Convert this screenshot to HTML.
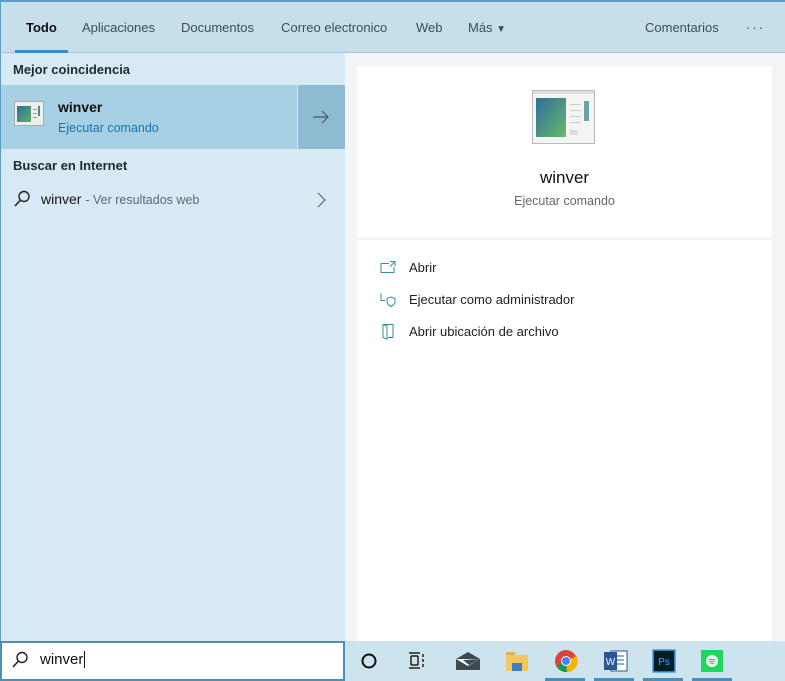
<!DOCTYPE html>
<html><head><meta charset="utf-8"><style>
*{margin:0;padding:0;box-sizing:border-box}
body{width:785px;height:681px;overflow:hidden;font-family:"Segoe UI","Liberation Sans",sans-serif;background:#cde3ee;position:relative;color:#1a1a1a}
.abs{position:absolute}
#top{left:0;top:0;width:785px;height:53px;background:#c6dfeb;border-top:2px solid #5d9cc2;border-left:1px solid #5d9cc2;border-bottom:1px solid #a9c6d4}
.tab{position:absolute;top:18px;font-size:13px;color:#3b4f5a}
#left{left:0;top:53px;width:345px;height:588px;background:#d7eaf3;border-left:1px solid #5d9cc2}
#right{left:345px;top:53px;width:440px;height:588px;background:#f2f4f5}
.card{position:absolute;background:#fff}
.act{position:absolute;left:52px;font-size:13px;color:#222}
</style></head><body>
<div id="top" class="abs">
<div class="tab" style="left:25px;color:#111;font-weight:bold">Todo</div>
<div class="abs" style="left:14px;top:48px;width:53px;height:3px;background:#3a8cc4"></div>
<div class="tab" style="left:81px">Aplicaciones</div>
<div class="tab" style="left:180px">Documentos</div>
<div class="tab" style="left:280px">Correo electronico</div>
<div class="tab" style="left:415px">Web</div>
<div class="tab" style="left:467px">Más <span style="font-size:10px">▼</span></div>
<div class="tab" style="left:644px">Comentarios</div>
<div class="tab" style="left:745px;letter-spacing:2px">···</div>
</div>
<div id="left" class="abs">
<div class="abs" style="left:12px;top:9px;font-size:13px;font-weight:bold;color:#1e2a30">Mejor coincidencia</div>
<div class="abs" style="left:0;top:32px;width:296px;height:64px;background:#a8d0e5"></div>
<div class="abs" style="left:297px;top:32px;width:48px;height:64px;background:#8fbbd2"></div>
<svg class="abs" style="left:311px;top:57px" width="18" height="14"><path d="M1 7H16M10 1L16 7L10 13" fill="none" stroke="#4a5a63" stroke-width="1.2"/></svg>
<svg class="abs" style="left:13px;top:48px" width="30" height="25"><rect x="0.5" y="0.5" width="29" height="24" fill="#eee" stroke="#aaa"/><defs><linearGradient id="g" x1="0" y1="0" x2="1" y2="1"><stop offset="0" stop-color="#2a6f9a"/><stop offset="1" stop-color="#5fb06a"/></linearGradient></defs><rect x="3" y="5" width="14" height="16" fill="url(#g)"/><rect x="24" y="5" width="2" height="10" fill="#4a8a8a"/><rect x="19" y="8" width="4" height="1" fill="#999"/><rect x="19" y="12" width="4" height="1" fill="#999"/><rect x="19" y="16" width="4" height="1" fill="#999"/></svg>
<div class="abs" style="left:57px;top:46px;font-size:14px;font-weight:bold;color:#111">winver</div>
<div class="abs" style="left:57px;top:68px;font-size:12.5px;color:#1a73b0">Ejecutar comando</div>
<div class="abs" style="left:12px;top:105px;font-size:13px;font-weight:bold;color:#1e2a30">Buscar en Internet</div>
<svg class="abs" style="left:12px;top:137px" width="18" height="18"><circle cx="11" cy="6.5" r="5" fill="none" stroke="#222" stroke-width="1.4"/><line x1="7.5" y1="10" x2="2" y2="16" stroke="#222" stroke-width="1.6"/></svg>
<div class="abs" style="left:40px;top:138px;font-size:14px;color:#111">winver <span style="font-size:12.5px;color:#5a6a72">- Ver resultados web</span></div>
<svg class="abs" style="left:316px;top:139px" width="10" height="16"><path d="M1 1L8 8L1 15" fill="none" stroke="#5a6a72" stroke-width="1.2"/></svg>
</div>
<div id="right" class="abs">
<div class="card" style="left:12px;top:13px;width:415px;height:171px">
<svg class="abs" style="left:175px;top:24px" width="63" height="54"><defs><linearGradient id="g2" x1="0" y1="0" x2="1" y2="1"><stop offset="0" stop-color="#2d6f9c"/><stop offset="1" stop-color="#68b86a"/></linearGradient></defs><rect x="0.5" y="0.5" width="62" height="53" fill="#f4f4f4" stroke="#bbb"/><rect x="1" y="1" width="61" height="3" fill="#ddd"/><rect x="4" y="8" width="30" height="39" fill="url(#g2)"/><rect x="52" y="11" width="5" height="20" fill="#6aa2a8"/><rect x="38" y="14" width="11" height="1" fill="#ccc"/><rect x="38" y="20" width="11" height="1" fill="#ccc"/><rect x="38" y="26" width="11" height="1" fill="#ccc"/><rect x="38" y="32" width="11" height="1" fill="#ccc"/><rect x="38" y="40" width="8" height="5" fill="#ddd"/></svg>
<div class="abs" style="left:0;width:415px;top:102px;text-align:center;font-size:17px;color:#111">winver</div>
<div class="abs" style="left:0;width:415px;top:128px;text-align:center;font-size:12.5px;color:#666">Ejecutar comando</div>
</div>
<div class="card" style="left:12px;top:187px;width:415px;height:401px">
<svg class="abs" style="left:23px;top:20px" width="18" height="14"><path d="M1 3.5H9M1 3.5V12.5H14V7M10 1.5H15V6M15 1.5L10 6.5" fill="none" stroke="#3a8c94" stroke-width="1"/></svg>
<div class="act" style="top:20px">Abrir</div>
<svg class="abs" style="left:23px;top:52px" width="18" height="16"><path d="M1 1.5V8.5H5M7 6.5L11 5L15 6.5V10C15 12.5 11 14.5 11 14.5C11 14.5 7 12.5 7 10Z" fill="none" stroke="#3a8c94" stroke-width="1"/></svg>
<div class="act" style="top:52px">Ejecutar como administrador</div>
<svg class="abs" style="left:24px;top:83px" width="16" height="17"><path d="M2 1.5H12V14.5H7M2 1.5V14.5L6 16V3Z" fill="none" stroke="#3a8c94" stroke-width="1"/></svg>
<div class="act" style="top:84px">Abrir ubicación de archivo</div>
</div>
</div>
<div class="abs" style="left:0;top:641px;width:345px;height:40px;background:#fff;border:2px solid #4a8fb5"></div>
<svg class="abs" style="left:11px;top:651px" width="18" height="18"><circle cx="11" cy="6.5" r="5" fill="none" stroke="#222" stroke-width="1.4"/><line x1="7.5" y1="10" x2="2" y2="16" stroke="#222" stroke-width="1.6"/></svg>
<div class="abs" style="left:40px;top:651px;font-size:15px;color:#111">winver<span style="border-left:1px solid #111;margin-left:1px"></span></div>
<svg class="abs" style="left:360px;top:652px" width="18" height="18"><circle cx="9" cy="9" r="6.5" fill="none" stroke="#111" stroke-width="2"/></svg>
<svg class="abs" style="left:407px;top:651px" width="20" height="20"><path d="M2 2H13M2 17H13M4 5V14M11 5V14M4 5H11M4 14H11M16 3V6M16 8V11M16 13V16" stroke="#222" stroke-width="1.5" fill="none"/></svg>
<svg class="abs" style="left:455px;top:651px" width="26" height="20"><path d="M1 8L13 1L25 8V19H1Z" fill="#3b4a52"/><path d="M1 8L25 8L13 15Z" fill="#fff"/><path d="M8 9L25 8L14 14Z" fill="#3b4a52"/></svg>
<svg class="abs" style="left:505px;top:650px" width="24" height="22"><rect x="1" y="2" width="9" height="5" fill="#e5b440"/><rect x="1" y="5" width="22" height="16" fill="#f3c85a"/><rect x="7" y="13" width="10" height="8" fill="#3d7fc0"/></svg>
<svg class="abs" style="left:554px;top:649px" width="24" height="24"><circle cx="12" cy="12" r="11" fill="#db4437"/><path d="M12 12L2.5 17.5A11 11 0 0 0 13 23Z" fill="#0f9d58"/><path d="M12 12L13 23A11 11 0 0 0 22.5 7Z" fill="#f4b400"/><circle cx="12" cy="12" r="5" fill="#fff"/><circle cx="12" cy="12" r="4" fill="#4285f4"/></svg>
<svg class="abs" style="left:603px;top:649px" width="25" height="24"><rect x="8" y="2" width="16" height="20" fill="#fff" stroke="#2b5797"/><path d="M14 7H21M14 11H21M14 15H21" stroke="#2b5797"/><rect x="1" y="3" width="13" height="18" fill="#2b5797"/><text x="7.5" y="16" fill="#fff" font-size="10" text-anchor="middle" font-family="Liberation Sans">W</text></svg>
<svg class="abs" style="left:652px;top:649px" width="24" height="24"><rect x="1" y="1" width="22" height="22" fill="#001d26" stroke="#3ca1e0" stroke-width="1.5"/><text x="12" y="16" fill="#31a8ff" font-size="10" text-anchor="middle" font-family="Liberation Sans">Ps</text></svg>
<svg class="abs" style="left:700px;top:649px" width="24" height="24"><rect x="1" y="1" width="22" height="22" fill="#1ed760"/><circle cx="12" cy="12" r="6" fill="#fff"/><path d="M8.5 10.5Q12 9.5 15.5 11M9 12.5Q12 11.7 15 13M9.5 14.3Q12 13.8 14.5 15" stroke="#1ed760" stroke-width="1"/></svg>
<div class="abs" style="left:545px;top:678px;width:40px;height:3px;background:#4a8fb5"></div>
<div class="abs" style="left:594px;top:678px;width:40px;height:3px;background:#4a8fb5"></div>
<div class="abs" style="left:643px;top:678px;width:40px;height:3px;background:#4a8fb5"></div>
<div class="abs" style="left:692px;top:678px;width:40px;height:3px;background:#4a8fb5"></div>
</body></html>
